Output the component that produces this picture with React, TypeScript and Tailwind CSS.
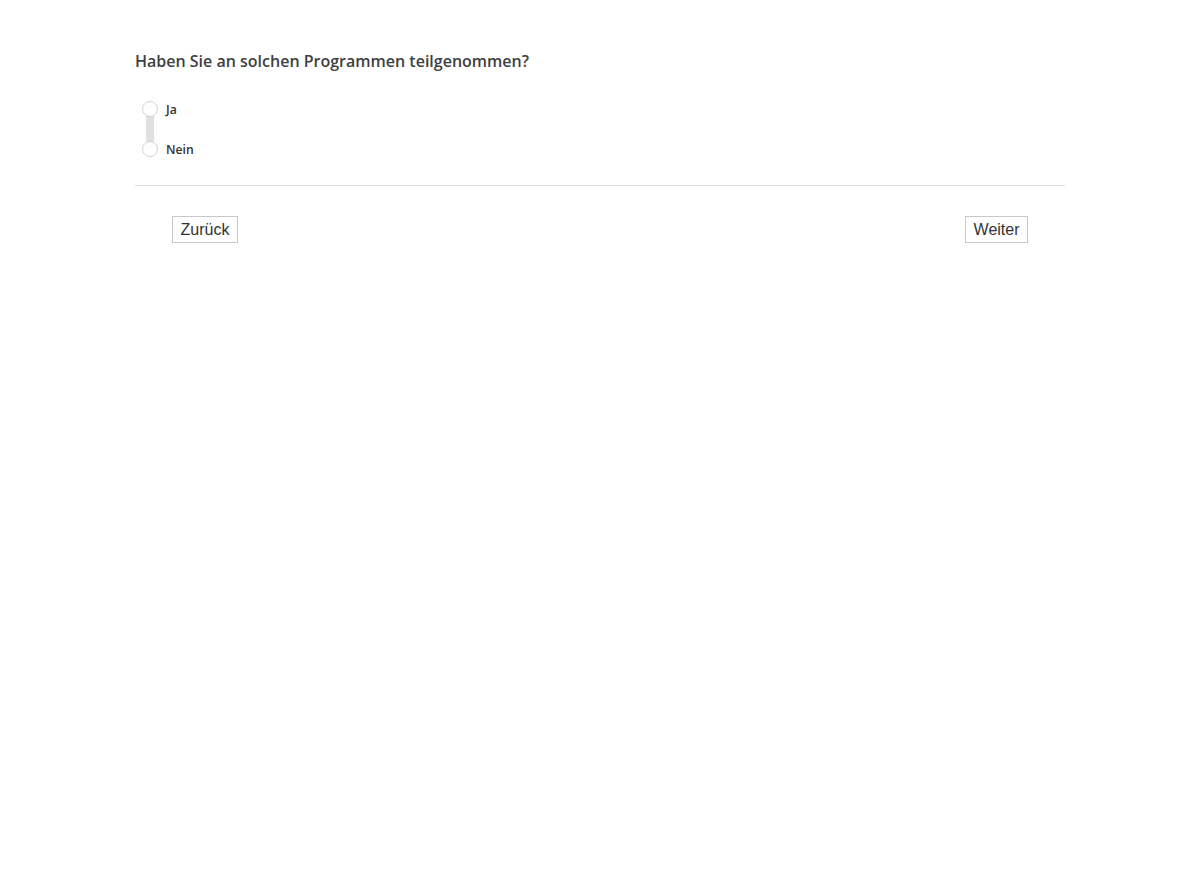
import React from "react";

const options = ["Ja", "Nein"];

export default function App() {
  return (
    <div className="min-h-screen bg-white font-['Open_Sans',sans-serif] text-[#444]">
      <div className="mx-auto w-[930px] pt-[50px]">
        <h2 className="text-[16px] font-semibold leading-[22px] text-[#3f3f3f]">
          Haben Sie an solchen Programmen teilgenommen?
        </h2>
        <div className="relative mt-[29px] ml-[7px] flex flex-col gap-[24px]">
          <div className="absolute left-[4px] top-[8px] h-[40px] w-[8px] bg-[#e0e0e0]" />
          {options.map((o) => (
            <label key={o} className="relative flex h-[16px] items-center gap-[8px]">
              <span className="h-[16px] w-[16px] rounded-full border border-[#d4d4d4] bg-white" />
              <span className="relative top-[1px] text-[12.2px] font-semibold text-[#333]">{o}</span>
            </label>
          ))}
        </div>
        <div className="mt-[28px] border-t border-[#dcdcdc]" />
        <div className="mt-[30px] flex justify-between px-[37px]">
          <button className="h-[27px] border border-[#c8c8c8] bg-white px-[7.5px] font-['Liberation_Sans',Arial,sans-serif] text-[16px] text-[#333]">
            Zurück
          </button>
          <button className="h-[27px] border border-[#c8c8c8] bg-white px-[7.5px] font-['Liberation_Sans',Arial,sans-serif] text-[16px] text-[#333]">
            Weiter
          </button>
        </div>
      </div>
    </div>
  );
}
